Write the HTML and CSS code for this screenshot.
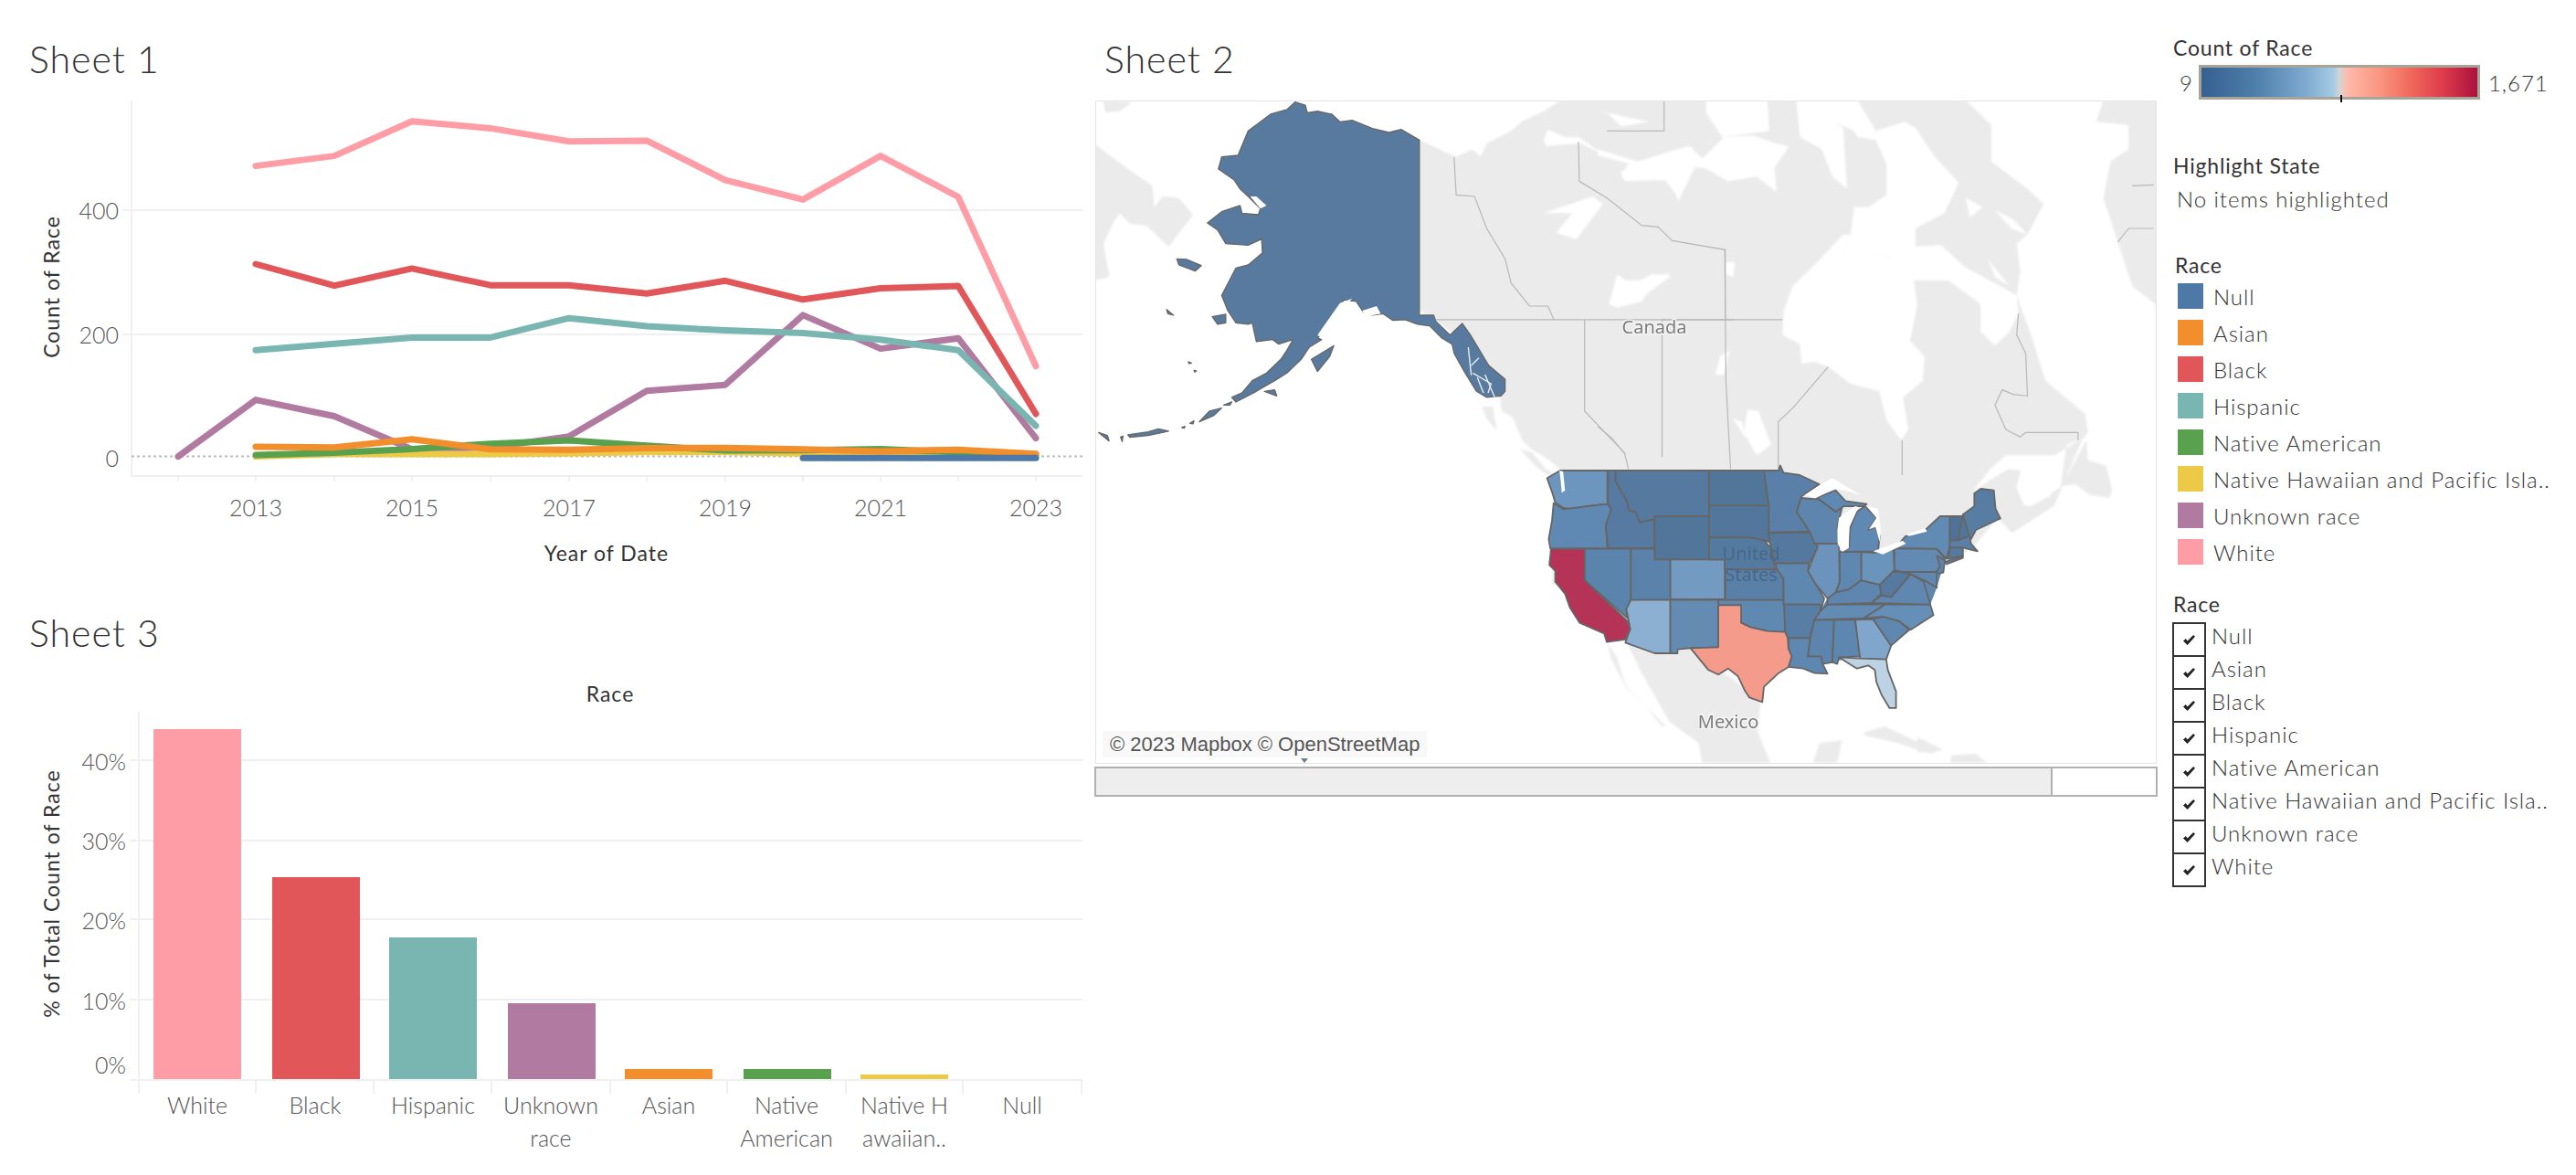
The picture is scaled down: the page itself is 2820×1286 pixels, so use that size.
FILE: index.html
```html
<!DOCTYPE html>
<html lang="en">
<head>
<meta charset="utf-8">
<title>Dashboard</title>
<link rel="stylesheet" href="styles.css">
</head>
<body>
<div class="dash">
  <section class="col-charts">
    <h2 class="title first">Sheet 1</h2>
    <svg class="chart chart-line" viewBox="0 100 1200 540" aria-label="Count of Race by year">
      <g class="grid">
        <line x1="134" y1="230" x2="1185" y2="230"/>
        <line x1="134" y1="366" x2="1185" y2="366"/>
        <line x1="144" y1="521" x2="1185" y2="521"/>
        <line x1="144" y1="110" x2="144" y2="521"/>
      </g>
      <line class="zero" x1="144" y1="499.6" x2="1185" y2="499.6"/>
      <g class="ticks">
        <line x1="195" y1="521" x2="195" y2="527"/><line x1="280" y1="521" x2="280" y2="527"/><line x1="366" y1="521" x2="366" y2="527"/><line x1="451" y1="521" x2="451" y2="527"/><line x1="537" y1="521" x2="537" y2="527"/><line x1="623" y1="521" x2="623" y2="527"/><line x1="708" y1="521" x2="708" y2="527"/><line x1="794" y1="521" x2="794" y2="527"/><line x1="879" y1="521" x2="879" y2="527"/><line x1="964" y1="521" x2="964" y2="527"/><line x1="1049" y1="521" x2="1049" y2="527"/><line x1="1134" y1="521" x2="1134" y2="527"/>
      </g>
      <polyline class="ln c-white" points="280,181.6 366,170.6 451,132.7 537,140.4 623,154.7 708,153.9 794,197.1 879,218.4 964,170.6 1049,215.5 1134,400.8"/>
      <polyline class="ln c-black" points="280,289 366,312.7 451,293.9 537,312.2 623,312.2 708,321.2 794,307.3 879,327.8 964,315.5 1049,313 1134,453"/>
      <polyline class="ln c-unknown" points="195,499.6 280,437.6 366,455.5 451,491.8 537,489.8 623,477.6 708,427.8 794,421.2 879,344.9 964,381.6 1049,370.2 1134,479.6"/>
      <polyline class="ln c-hispanic" points="280,383.3 366,376.3 451,369.4 537,369.4 623,348.2 708,357.1 794,361.6 879,364.5 964,371.8 1049,383.3 1134,466.1"/>
      <polyline class="ln c-hawaiian" points="280,499.6 366,497 451,497 537,497 623,496.3 708,494.7 794,494.7 879,496.3 964,497 1049,498 1134,498.8"/>
      <polyline class="ln c-native" points="280,498 366,495.5 451,491.4 537,485.7 623,482 708,487.8 794,493 879,492.7 964,491.4 1049,495 1134,498"/>
      <polyline class="ln c-asian" points="280,489 366,489.8 451,480.8 537,491.8 623,492.2 708,490.6 794,490.2 879,491.8 964,493.9 1049,492.2 1134,496.7"/>
      <polyline class="ln c-null" points="879,501.2 964,501.2 1049,501.2 1134,501.2"/>
      <text class="axis end" x="130" y="240">400</text>
      <text class="axis end" x="130" y="376">200</text>
      <text class="axis end" x="130" y="511">0</text>
      <text class="axis mid" x="280" y="565">2013</text>
      <text class="axis mid" x="451" y="565">2015</text>
      <text class="axis mid" x="623" y="565">2017</text>
      <text class="axis mid" x="794" y="565">2019</text>
      <text class="axis mid" x="964" y="565">2021</text>
      <text class="axis mid" x="1134" y="565">2023</text>
      <text class="axis-title mid" x="664" y="614">Year of Date</text>
      <text class="axis-title mid" transform="translate(65 314) rotate(-90)">Count of Race</text>
    </svg>
    <h2 class="title second">Sheet 3</h2>
    <svg class="chart chart-bar" viewBox="0 718 1200 568" aria-label="Percent of total by race">
      <g class="grid">
        <line x1="142" y1="832" x2="1185" y2="832"/>
        <line x1="142" y1="920" x2="1185" y2="920"/>
        <line x1="142" y1="1006" x2="1185" y2="1006"/>
        <line x1="142" y1="1094" x2="1185" y2="1094"/>
        <line x1="142" y1="1182" x2="1185" y2="1182"/>
        <line x1="152" y1="779" x2="152" y2="1197"/>
        <line x1="280" y1="1182" x2="280" y2="1197"/><line x1="409" y1="1182" x2="409" y2="1197"/><line x1="538" y1="1182" x2="538" y2="1197"/><line x1="668" y1="1182" x2="668" y2="1197"/><line x1="796" y1="1182" x2="796" y2="1197"/><line x1="926" y1="1182" x2="926" y2="1197"/><line x1="1054" y1="1182" x2="1054" y2="1197"/><line x1="1184" y1="1182" x2="1184" y2="1197"/>
      </g>
      <rect class="f-white" x="168" y="798" width="96" height="383"/>
      <rect class="f-black" x="298" y="960" width="96" height="221"/>
      <rect class="f-hispanic" x="426" y="1026" width="96" height="155"/>
      <rect class="f-unknown" x="556" y="1098" width="96" height="83"/>
      <rect class="f-asian" x="684" y="1170" width="96" height="11"/>
      <rect class="f-native" x="814" y="1170" width="96" height="11"/>
      <rect class="f-hawaiian" x="942" y="1176" width="96" height="5"/>
      <text class="axis-title mid" x="668" y="768">Race</text>
      <text class="axis end" x="138" y="843">40%</text>
      <text class="axis end" x="138" y="930">30%</text>
      <text class="axis end" x="138" y="1017">20%</text>
      <text class="axis end" x="138" y="1105">10%</text>
      <text class="axis end" x="138" y="1175">0%</text>
      <text class="axis mid" x="216" y="1219">White</text>
      <text class="axis mid" x="345" y="1219">Black</text>
      <text class="axis mid" x="474" y="1219">Hispanic</text>
      <text class="axis mid" x="603" y="1219">Unknown</text>
      <text class="axis mid" x="603" y="1255">race</text>
      <text class="axis mid" x="732" y="1219">Asian</text>
      <text class="axis mid" x="861" y="1219">Native</text>
      <text class="axis mid" x="861" y="1255">American</text>
      <text class="axis mid" x="990" y="1219">Native H</text>
      <text class="axis mid" x="990" y="1255">awaiian..</text>
      <text class="axis mid" x="1119" y="1219">Null</text>
      <text class="axis-title mid" transform="translate(65 978) rotate(-90)">% of Total Count of Race</text>
    </svg>
  </section>

  <section class="col-map">
    <h2 class="title first map-title">Sheet 2</h2>
    <div class="map">
      <svg class="map-svg" viewBox="1201 111 1160 724" aria-label="Map of North America">
        <rect x="1201" y="111" width="1160" height="724" fill="#fff"/>
        <g class="base">
        <polygon class="land" points="1555,110 2362,110 2362,440 2273,440 2287,453 2287,473 2280,482 2250,553 2203,583 2188,567 2160,600 2100,640 1700,640 1708,513 1692,500 1678,492 1668,483 1657,457 1645,450 1643,435 1600,370 1555,340"/>
        <g class="land" transform="translate(1200 100) scale(.4464 .3333)">
          <polygon points="0,175 60,235 140,310 145,380 165,345 205,350 240,405 180,510 125,440 85,435 60,400 45,430 20,500 35,610 0,620"/>
          <polygon points="20,30 90,35 60,65 25,70"/>
        </g>
        <g class="water" transform="translate(1200 100) scale(.4464 .3333)">
          <polygon points="795,30 1140,30 1100,65 1050,95 1020,130 960,170 945,215 925,190 885,215 795,160"/>
          <polygon points="1100,160 1110,125 1150,150 1185,150 1250,210 1300,235 1340,230 1400,245 1430,210 1460,180 1490,230 1568,215 1568,260 1470,250 1430,360 1410,290 1300,295 1290,270 1310,235 1250,210 1190,170 1105,180"/>
          <polygon points="1230,60 1300,85 1360,100 1290,115 1255,70"/>
          <polygon points="1100,400 1220,345 1245,370 1200,450 1180,485 1130,465 1170,400"/>
          <polygon points="1260,700 1280,600 1300,620 1345,620 1410,595 1360,650 1340,690 1280,710"/>
        </g>
        <g class="water" transform="translate(1750 100) scale(.3954 .3333)">
          <polygon points="300,30 470,30 475,130 345,150 300,70"/>
          <polygon points="0,190 110,230 250,180 290,220 350,150 430,145 490,170 530,180 490,250 495,330 440,280 360,295 280,240 210,240 220,340 170,270 70,290 65,265 95,240 0,210"/>
          <polygon points="550,30 720,30 770,130 850,100 880,120 930,210 1000,300 960,400 880,450 880,510 820,550 760,530 715,580 680,550 700,470 710,380 750,380 800,340 800,240 770,160 720,150 710,130 650,100 680,120 690,320 650,280 620,190 560,150"/>
          <polygon points="515,720 540,640 600,570 680,470 700,470 680,550 715,580 760,530 815,550 880,510 950,505 1020,580 1100,630 1160,670 1165,730 1140,790 1100,835 1060,790 1060,700 1040,680 970,620 875,620 885,700 865,820 905,870 900,950 845,1005 860,1110 840,1145 800,1080 780,985 700,960 640,905 600,888 565,895 560,830 512,800"/>
          <polygon points="1020,30 1400,30 1380,100 1470,110 1470,190 1420,230 1400,350 1480,640 1545,700 1545,1140 1360,1140 1350,1060 1240,950 1200,800 1160,670 1170,590 1160,500 1190,470 1235,370 1190,320 1090,230 1090,110"/>
          <polygon points="1020,350 1065,380 1030,415"/>
          <polygon points="1100,390 1150,420 1190,470 1145,450"/>
          <polygon points="1080,550 1140,640 1100,610"/>
          <polygon points="40,680 60,605 90,640 150,600 205,605 130,670 70,705"/>
          <polygon points="355,560 380,560 375,610 355,600"/>
          <polygon points="340,870 365,850 350,930 325,930"/>
          <polygon points="415,1045 445,1050 480,1160 440,1195 405,1120"/>
          <polygon points="375,1075 400,1085 410,1140"/>
        </g>
        <g class="water" transform="translate(2100 440) scale(.3333)">
          <polygon points="180,295 240,220 290,175 450,175 540,120 490,140 470,280 440,300 420,350 350,340 325,280 340,225 300,220 240,255"/>
        </g>
        <g class="land" transform="translate(2100 440) scale(.3333)">
          <polygon points="475,275 555,125 560,190 620,210 640,290 630,315 565,305 520,270"/>
          <polygon points="0,1100 80,1140 40,1150 0,1150"/>
          <polygon points="110,1160 190,1155 230,1185 110,1185"/>
          <polygon points="295,400 340,360 430,310 450,340 310,430"/>
        </g>
        <g class="land" transform="translate(1550 380) scale(.3333)">
          <polygon points="220,195 255,195 270,275 235,235"/>
          <polygon points="345,335 385,345 430,400 470,425 435,420 395,390"/>
        </g>
        <g class="land" transform="translate(1650 480) scale(.357 .3333)">
          <polygon points="365,660 410,760 500,930 590,1000 600,1065 810,1065 770,960 780,860 560,680"/>
          <polygon points="310,668 340,720 365,810 490,945 475,945 430,880 365,815 320,720"/>
          <polygon points="940,1065 960,1000 1030,990 1015,1065"/>
          <polygon points="1095,965 1160,945 1270,1000 1340,1020 1300,1035 1200,1000 1100,975"/>
          <polygon points="1380,1040 1480,1065 1360,1065"/>
        </g>
        </g>
        <g class="borders" transform="translate(1200 100) scale(.4464 .3333)">
          <polyline points="880,215 885,340 930,345 960,450 1005,550 1020,630 1065,705 1110,705 1125,750"/>
          <polyline points="1185,165 1187,295 1255,350 1340,440 1380,445 1415,490 1545,520 1545,750"/>
          <polyline points="835,750 1568,750"/>
          <polyline points="1200,750 1200,1050 1300,1190"/>
          <polyline points="1390,750 1390,1200"/>
          <polyline points="1255,130 1395,130 1395,30"/>
        </g>
        <g class="borders" transform="translate(1750 100) scale(.3954 .3333)">
          <polyline points="180,750 512,750"/>
          <polyline points="352,520 355,950 368,1240"/>
          <polyline points="500,1240 500,1085 540,1040 638,905"/>
          <polyline points="843,1145 843,1260"/>
          <polyline points="1165,730 1160,800 1185,860 1190,1000 1150,995 1120,980 1100,1030 1130,1110 1170,1135 1185,1120 1330,1120 1330,1145"/>
          <polyline points="0,1100 40,1140 75,1190 85,1240"/>
          <polyline points="1480,310 1540,307"/>
          <polyline points="1440,495 1470,450 1540,450"/>
        </g>
        <g class="states" transform="translate(1200 100) scale(.4464 .3333)" fill="#587a9f">
          <polygon points="490,35 515,45 520,70 545,65 580,75 600,100 630,95 680,122 720,135 750,125 795,160 795,735 830,735 835,755 870,800 900,762 920,800 965,900 1005,945 1005,985 995,1000 960,1005 935,985 905,920 880,860 875,830 850,810 820,770 790,765 760,750 730,752 705,730 680,735 660,730 640,690 610,685 590,720 560,790 545,810 555,815 525,840 505,880 470,925 440,950 420,965 395,985 345,1020 335,1005 360,990 385,950 420,925 455,880 470,850 485,815 450,830 435,815 395,822 385,760 375,765 345,760 325,720 310,670 345,580 375,570 410,530 408,485 375,505 320,500 300,455 275,432 310,395 355,375 360,400 400,405 405,385 375,345 355,320 340,290 302,255 310,215 350,210 375,130 430,75 470,60"/>
          <polygon points="200,550 225,552 260,572 245,590 205,570"/>
          <polygon points="530,880 585,835 575,870 545,920"/>
          <polygon points="287,740 320,732 320,760 300,765"/>
          <polygon points="255,1085 280,1050 310,1040 290,1065"/>
          <polygon points="80,1128 130,1118 155,1108 180,1116 130,1130 85,1136"/>
          <polygon points="175,716 192,735 178,730"/>
          <polygon points="330,1030 335,1020 315,1030"/>
          <polygon points="212,1104 220,1100 218,1106"/>
          <polygon points="232,1090 242,1082 240,1092"/>
          <polygon points="62,1135 68,1132 66,1150"/>
          <polygon points="8,1120 30,1130 34,1148"/>
          <polygon points="228,888 236,892 230,894"/>
          <polygon points="242,916 248,918 244,922"/>
          <polygon points="415,985 440,980 445,1000"/>
        </g>
        <g class="water" transform="translate(1200 100) scale(.4464 .3333)">
          <polygon points="630,680 600,695 545,800 555,810 590,740"/>
          <polygon points="655,720 690,705 700,730 660,740"/>
          <polygon points="380,345 395,345 420,375 405,385"/>
        </g>
        <g class="slivers" transform="translate(1550 380) scale(.3333)">
          <polyline points="175,0 185,92"/>
          <polyline points="210,35 185,60"/>
          <polyline points="190,85 250,120 240,150"/>
          <polyline points="230,90 262,165"/>
          <polyline points="205,100 225,150"/>
        </g>
        <g class="underlay" transform="translate(1650 480) scale(.357 .3333)">
          <polygon points="945,595 985,525 1010,500 1022,372 1140,370 1190,360 1360,340 1345,400 1320,490 1300,545 1310,580 1240,628 1180,680 1000,735"/>
        </g>
        <g class="states us" transform="translate(1650 480) scale(.357 .3333)">
          <polygon fill="#6d96be" points="125,130 165,105 310,105 310,215 250,222 205,232 175,228 150,210 140,175"/>
          <polygon fill="#5f89b2" points="145,212 175,232 250,222 310,215 322,232 305,285 310,360 135,362 130,330 140,270"/>
          <polygon fill="#5a84ab" points="240,362 382,362 382,530 368,560 372,590 240,465"/>
          <polygon fill="#567aa1" points="312,105 335,105 335,140 372,210 375,235 395,240 410,275 453,265 455,360 312,360 305,285 322,232 312,215"/>
          <polygon fill="#56799f" points="335,105 622,105 622,255 455,255 453,265 410,275 395,240 375,235 372,210 335,140"/>
          <polygon fill="#527699" points="455,255 622,255 622,397 455,397"/>
          <polygon fill="#5b82aa" points="382,362 455,362 455,397 503,397 503,530 382,530"/>
          <polygon fill="#739ac0" points="503,397 670,397 670,528 503,528"/>
          <polygon fill="#8bb0d2" points="382,530 503,530 503,705 455,705 365,670 380,625 368,560"/>
          <polygon fill="#648cb3" points="503,530 650,530 650,685 565,688 525,692 525,705 503,705"/>
          <polygon fill="#527699" points="622,105 790,105 805,220 622,220"/>
          <polygon fill="#53779c" points="622,220 805,220 805,310 808,340 790,335 750,325 622,325"/>
          <polygon fill="#557a9f" points="622,325 750,325 790,335 808,355 825,430 670,430 670,397 622,397"/>
          <polygon fill="#5a80a8" points="672,430 830,430 850,460 850,530 672,530"/>
          <polygon fill="#6089b2" points="650,530 850,530 853,545 855,640 800,632 750,620 720,605 720,547 650,547"/>
          <polygon fill="#5a7fa8" points="790,105 835,105 840,88 850,112 900,120 960,150 905,190 890,240 930,305 805,308 805,220"/>
          <polygon fill="#55799e" points="805,310 930,308 955,355 945,380 928,410 825,410 808,340"/>
          <polygon fill="#5f88b1" points="825,410 928,410 925,435 950,480 975,525 965,560 955,545 850,545 850,460 830,430"/>
          <polygon fill="#587ea5" points="852,545 965,545 960,580 935,630 932,655 865,655 855,640"/>
          <polygon fill="#5f88b0" points="865,655 932,655 925,715 965,715 1000,715 970,740 985,772 945,770 910,755 865,750 875,715 865,690"/>
          <polygon fill="#5d84ac" points="945,595 1005,595 1000,735 970,740 965,715 925,715 932,655"/>
          <polygon fill="#5e87af" points="1005,595 1070,595 1085,715 1020,718 1015,740 1000,735"/>
          <polygon fill="#80a7cb" points="1070,595 1125,593 1180,680 1165,725 1085,725"/>
          <polygon fill="#bdd2e2" points="1020,718 1085,722 1165,725 1170,760 1195,830 1195,885 1175,885 1150,840 1135,800 1130,760 1110,745 1075,755 1045,735"/>
          <polygon fill="#5f87af" points="1125,593 1155,585 1205,600 1235,628 1180,680"/>
          <polygon fill="#668fb7" points="1095,590 1160,545 1300,545 1310,580 1280,600 1240,628 1205,600 1155,585"/>
          <polygon fill="#638cb5" points="985,545 1160,545 1095,590 945,595 965,565"/>
          <polygon fill="#5e86ae" points="1010,505 1050,495 1085,465 1145,480 1150,510 1120,540 985,545 985,525"/>
          <polygon fill="#5f87b0" points="1120,540 1150,515 1180,520 1240,445 1280,470 1300,545"/>
          <polygon fill="#55799f" points="1145,480 1190,432 1240,445 1180,520 1150,515"/>
          <polygon fill="#6b94bc" points="1088,372 1130,375 1187,362 1190,432 1145,480 1085,465 1088,460"/>
          <polygon fill="#5f88b1" points="1022,372 1088,372 1088,465 1050,495 1010,505 1022,470"/>
          <polygon fill="#6b93bb" points="950,345 1020,345 1022,470 1010,505 985,525 950,480 925,435 945,380 955,355"/>
          <polygon fill="#5d85ae" points="905,195 960,200 1010,240 1030,225 1015,290 1020,345 945,345 930,305 890,240"/>
          <polygon fill="#5f89b2" points="1022,372 1140,370 1145,320 1130,290 1110,300 1135,260 1100,222 1075,240 1055,290 1050,360"/>
          <polygon fill="#5f89b2" points="950,195 1010,170 1040,205 1105,215 1095,222 1035,222 1010,240 960,200"/>
          <polygon fill="#628ab3" points="1190,362 1210,360 1320,362 1345,395 1320,438 1190,438"/>
          <polygon fill="#628bb4" points="1190,362 1225,320 1285,300 1330,255 1360,255 1360,355 1350,395 1320,362 1210,360"/>
          <polygon fill="#5c84ac" points="1320,385 1345,400 1340,440 1315,445 1330,420"/>
          <polygon fill="#5f87af" points="1190,438 1320,438 1320,490 1290,470 1240,445 1190,432"/>
          <polygon fill="#4f7299" points="1360,255 1400,255 1385,335 1360,335"/>
          <polygon fill="#527699" points="1400,250 1420,320 1385,335"/>
          <polygon fill="#587da3" points="1420,320 1400,250 1435,222 1435,180 1455,165 1495,170 1500,230 1515,262 1470,285 1440,300 1425,330"/>
          <polygon fill="#5a80a8" points="1360,335 1385,335 1420,320 1425,345 1445,370 1425,365 1400,358 1360,358"/>
          <polygon fill="#557a9f" points="1360,358 1400,358 1400,385 1355,395"/>
          <polygon fill="#5d85ad" points="1345,405 1400,385 1400,392 1350,412"/>
          <polygon fill="#b53356" points="137,362 240,362 240,465 372,600 380,625 365,660 308,668 300,640 225,605 195,555 180,510 150,470 150,435 132,415"/>
          <polygon fill="#f59b8b" points="650,547 720,547 720,605 750,620 800,632 855,635 863,655 865,690 875,715 865,750 835,770 790,815 785,865 745,850 730,825 710,780 680,755 650,775 620,760 565,688 650,685"/>
        </g>
        <g class="water" transform="translate(1650 480) scale(.357 .3333)">
          <polygon points="163,105 174,108 180,170 170,178 167,140"/>
          <polygon points="915,185 965,150 1000,130 1085,185 1040,170 1005,165 950,195"/>
          <polygon points="1016,345 1015,300 1020,260 1070,222 1080,225 1052,290 1050,360 1030,372"/>
          <polygon points="1105,222 1140,230 1148,300 1145,340 1132,290 1112,298 1135,260"/>
          <polygon points="1125,370 1215,335 1225,345 1155,380"/>
          <polygon points="1225,315 1285,295 1290,305 1235,320"/>
        </g>
        <polygon class="marker" points="1425,830 1433,830 1429,835"/>
        <text class="place" x="1812" y="365">Canada</text>
        <text class="place" x="1893" y="797">Mexico</text>
        <text class="place-us" x="1918" y="613">United</text>
        <text class="place-us" x="1918" y="636">States</text>
      </svg>
      <div class="credit">© 2023 Mapbox © OpenStreetMap</div>
    </div>
    <div class="scroll"><div class="thumb"></div></div>
  </section>

  <aside class="col-legend">
    <div class="head">Count of Race</div>
    <div class="ramp">
      <span class="ramp-min">9</span>
      <div class="ramp-bar"><i class="ramp-tick"></i></div>
      <span class="ramp-max">1,671</span>
    </div>
    <div class="head highlight">Highlight State</div>
    <div class="noitems">No items highlighted</div>
    <div class="head race-a">Race</div>
    <ul class="swatches">
      <li><i class="sw f-null"></i>Null</li>
      <li><i class="sw f-asian"></i>Asian</li>
      <li><i class="sw f-black"></i>Black</li>
      <li><i class="sw f-hispanic"></i>Hispanic</li>
      <li><i class="sw f-native"></i>Native American</li>
      <li><i class="sw f-hawaiian"></i>Native Hawaiian and Pacific Isla..</li>
      <li><i class="sw f-unknown"></i>Unknown race</li>
      <li><i class="sw f-white"></i>White</li>
    </ul>
    <div class="head race-b">Race</div>
    <ul class="checks">
      <li><span class="box"><svg viewBox="0 0 16 14"><path d="M1 8 L4 5.5 L6 8 L13 1 L15 3 L6 13 Z"/></svg></span>Null</li>
      <li><span class="box"><svg viewBox="0 0 16 14"><path d="M1 8 L4 5.5 L6 8 L13 1 L15 3 L6 13 Z"/></svg></span>Asian</li>
      <li><span class="box"><svg viewBox="0 0 16 14"><path d="M1 8 L4 5.5 L6 8 L13 1 L15 3 L6 13 Z"/></svg></span>Black</li>
      <li><span class="box"><svg viewBox="0 0 16 14"><path d="M1 8 L4 5.5 L6 8 L13 1 L15 3 L6 13 Z"/></svg></span>Hispanic</li>
      <li><span class="box"><svg viewBox="0 0 16 14"><path d="M1 8 L4 5.5 L6 8 L13 1 L15 3 L6 13 Z"/></svg></span>Native American</li>
      <li><span class="box"><svg viewBox="0 0 16 14"><path d="M1 8 L4 5.5 L6 8 L13 1 L15 3 L6 13 Z"/></svg></span>Native Hawaiian and Pacific Isla..</li>
      <li><span class="box"><svg viewBox="0 0 16 14"><path d="M1 8 L4 5.5 L6 8 L13 1 L15 3 L6 13 Z"/></svg></span>Unknown race</li>
      <li><span class="box"><svg viewBox="0 0 16 14"><path d="M1 8 L4 5.5 L6 8 L13 1 L15 3 L6 13 Z"/></svg></span>White</li>
    </ul>
  </aside>
</div>
</body>
</html>
```

FILE: styles.css
```css
html, body { margin: 0; padding: 0; background: #fff; overflow: hidden; }
body { font-family: "Lato", "Open Sans", sans-serif; color: #444; }
.dash { display: grid; grid-template-columns: 1199px 1164px 1fr; height: 1286px; }

.title { margin: 0; font-weight: 300; font-size: 41px; line-height: 50px; color: #333; letter-spacing: 1px; padding-left: 32px; }
.title.first { padding-top: 40px; }
.title.second { padding-top: 28px; }
.map-title { padding-left: 10px; margin-bottom: 20px; }

.chart { display: block; width: 1200px; }
.chart-line { height: 540px; margin-top: 10px; }
.chart-bar { height: 568px; }

.grid line, .ticks line { stroke: #f0f0f0; stroke-width: 2; }
.ticks line { stroke-width: 1; stroke: #e4e4e4; }
.zero { stroke: #bbb; stroke-width: 2; stroke-dasharray: 3 3; }

.ln { fill: none; stroke-width: 7; stroke-linecap: round; stroke-linejoin: round; }
.c-white { stroke: #ff9da7; }
.c-black { stroke: #e15759; }
.c-hispanic { stroke: #79b6b1; }
.c-unknown { stroke: #b07aa1; }
.c-asian { stroke: #f28e2b; }
.c-native { stroke: #59a14f; }
.c-hawaiian { stroke: #edc948; }
.c-null { stroke: #4e79a7; }

.f-white { fill: #ff9da7; background: #ff9da7; }
.f-black { fill: #e15759; background: #e15759; }
.f-hispanic { fill: #79b6b1; background: #79b6b1; }
.f-unknown { fill: #b07aa1; background: #b07aa1; }
.f-asian { fill: #f28e2b; background: #f28e2b; }
.f-native { fill: #59a14f; background: #59a14f; }
.f-hawaiian { fill: #edc948; background: #edc948; }
.f-null { background: #4e79a7; }

.axis { font-family: "Lato", sans-serif; font-weight: 300; font-size: 25px; fill: #555; }
.axis-title { font-family: "Lato", sans-serif; font-weight: 400; font-size: 23px; fill: #333; letter-spacing: 1px; }
.end { text-anchor: end; }
.mid { text-anchor: middle; }

.map { position: relative; width: 1162px; height: 726px; box-sizing: border-box; border: 1px solid #e4e4e4; overflow: hidden; }
.map-svg { display: block; width: 100%; height: 100%; }
.base { filter: blur(1px); }
.land { fill: #ebebeb; }
.water { fill: #fff; }
.underlay { fill: #5f87af; }
.borders { fill: none; stroke: #b8b8b8; }
.borders polyline { stroke-width: 1.2; vector-effect: non-scaling-stroke; }
.states polygon { stroke: #666; stroke-width: 1.3; vector-effect: non-scaling-stroke; stroke-linejoin: round; }
.us polygon { stroke-width: 1.8; }
.slivers polyline { fill: none; stroke: #e8edf2; stroke-width: 1.4; vector-effect: non-scaling-stroke; }
.marker { fill: #6a7f95; }
.place { font-family: "Noto Sans", sans-serif; font-size: 20px; fill: #7d7d7d; text-anchor: middle; paint-order: stroke; stroke: #f4f4f4; stroke-width: 3px; }
.place-us { font-family: "Noto Sans", sans-serif; font-size: 20px; fill: #47678a; text-anchor: middle; }
.credit { position: absolute; left: 7px; bottom: 6px; height: 29px; padding: 0 8px; background: #f8f8f8; color: #555; font: 22px/29px "Liberation Sans", sans-serif; white-space: nowrap; }

.scroll { display: flex; box-sizing: border-box; width: 1164px; height: 33px; margin: 3px 0 0 -1px; border: 2px solid #b0b0b0; }
.thumb { width: 1045px; background: #eee; border-right: 2px solid #b0b0b0; }

.col-legend { padding: 38px 0 0 16px; font-size: 24px; font-weight: 300; color: #333; letter-spacing: .95px; }
.head { font-size: 23px; line-height: 28px; font-weight: 400; color: #333; letter-spacing: .8px; }
.ramp { display: flex; align-items: center; height: 38px; margin-top: 5px; }
.ramp-min { width: 28px; padding-left: 7px; box-sizing: border-box; }
.ramp-bar { position: relative; box-sizing: border-box; width: 308px; height: 38px; border: 3px solid #a8a498; background: linear-gradient(90deg, #35608f 0%, #4f7fab 20%, #7fabd0 38%, #a6cce4 48%, #d5d5d5 50%, #ffb9aa 53%, #f9947f 65%, #f0685a 76%, #dc3a4b 88%, #a9123d 100%); }
.ramp-tick { position: absolute; left: 152px; bottom: -6px; width: 2px; height: 8px; background: #111; }
.ramp-max { padding-left: 9px; }
.highlight { margin-top: 58px; }
.noitems { line-height: 34px; margin-top: 6px; padding-left: 4px; }
.race-a { margin-top: 41px; padding-left: 2px; }
.swatches, .checks { list-style: none; margin: 0; padding: 0; }
.swatches { padding-left: 5px; }
.swatches li { display: flex; align-items: center; height: 40px; gap: 11px; white-space: nowrap; }
.sw { display: block; width: 28px; height: 28px; }
.race-b { margin-top: 23px; }
.checks { margin: 6px 0 0 -1px; }
.checks li { display: flex; align-items: flex-start; height: 36px; gap: 6px; white-space: nowrap; line-height: 30px; }
.box { display: flex; align-items: center; justify-content: center; box-sizing: border-box; width: 37px; height: 38px; flex: none; border: 2px solid #333; }
.box svg { display: block; width: 15px; height: 13px; fill: #222; }
```
